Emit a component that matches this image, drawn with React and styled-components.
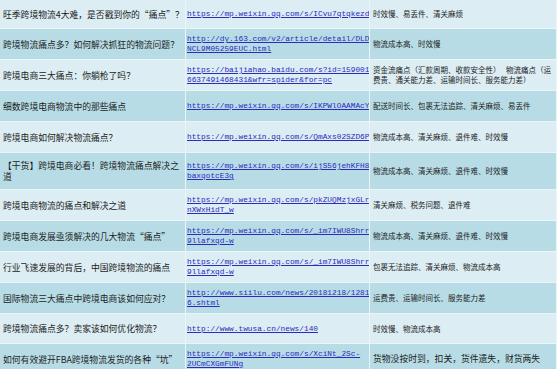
import React from "react";
import styled, { createGlobalStyle } from "styled-components";

const GlobalStyle = createGlobalStyle`
  html, body { margin: 0; padding: 0; background: #ffffff; }
  body { font-family: "Noto Sans CJK SC", "Noto Sans", sans-serif; overflow: hidden; }
`;

const Sheet = styled.div`
  display: flex;
  flex-direction: column;
  gap: 1px;
  width: 556px;
  padding-right: 1px;
  background: #eaf5f9;
`;

const Row = styled.div`
  --shade: ${(p) => (p.$dark ? "#b8dce6" : "#dcedf3")};
  display: grid;
  grid-template-columns: 185px 183px 186px;
  column-gap: 1px;
  height: ${(p) => p.$h}px;
  background: #eaf5f9;
`;

const TitleCell = styled.div`
  display: flex;
  align-items: center;
  padding-left: 3px;
  background: var(--shade);
  color: #1c1c1c;
  font-size: 8.8px;
  line-height: 11px;
  overflow: hidden;
`;

const LinkCell = styled.div`
  display: flex;
  flex-direction: column;
  justify-content: center;
  padding-left: 1px;
  background: var(--shade);
  overflow: hidden;
`;

const LinkLine = styled.a`
  display: block;
  white-space: nowrap;
  font-family: "Liberation Mono", "DejaVu Sans Mono", monospace;
  font-size: 7.8px;
  line-height: 10px;
  color: #2b2bbd;
  text-decoration: underline;
`;

const NoteCell = styled.div`
  display: flex;
  flex-direction: column;
  justify-content: center;
  padding-left: 3px;
  background: var(--shade);
  color: #1c1c1c;
  font-size: ${(p) => (p.$big ? "8.8px" : "7.5px")};
  line-height: 10px;
  overflow: hidden;
`;

const NoteLine = styled.span`
  display: block;
  white-space: nowrap;
`;

const rows = [
  {
    h: 28,
    title: "旺季跨境物流4大难，是否戳到你的“痛点”？",
    link: ["https://mp.weixin.qq.com/s/ICvu7qtqkezdXw"],
    note: ["时效慢、易丢件、清关麻烦"],
  },
  {
    h: 30,
    dark: true,
    title: "跨境物流痛点多？如何解决抓狂的物流问题？",
    link: ["http://dy.163.com/v2/article/detail/DLD", "NCL9M05259EUC.html"],
    note: ["物流成本高、时效慢"],
  },
  {
    h: 30,
    title: "跨境电商三大痛点：你躺枪了吗？",
    link: ["https://baijiahao.baidu.com/s?id=159001", "6637491468431&wfr=spider&for=pc"],
    note: ["资金流痛点（汇款周期、收款安全性）　 物流痛点（运", "费贵、通关能力差、运输时间长、服务能力差）"],
  },
  {
    h: 30,
    dark: true,
    title: "细数跨境电商物流中的那些痛点",
    link: ["https://mp.weixin.qq.com/s/IKPWlOAAMAcYtE"],
    note: ["配送时间长、包裹无法追踪、清关麻烦、易丢件"],
  },
  {
    h: 30,
    title: "跨境电商如何解决物流痛点？",
    link: ["https://mp.weixin.qq.com/s/QmAxs02SZD6PiQ"],
    note: ["物流成本高、清关麻烦、退件难、时效慢"],
  },
  {
    h: 36,
    dark: true,
    title: "【干货】跨境电商必看！跨境物流痛点解决之道",
    link: ["https://mp.weixin.qq.com/s/ijS56jehKFH8", "baxqotcE3g"],
    note: ["物流成本高、清关麻烦、退件难、时效慢"],
  },
  {
    h: 30,
    title: "跨境电商物流的痛点和解决之道",
    link: ["https://mp.weixin.qq.com/s/pkZUQMzjxGLr", "nXWxHidT_w"],
    note: ["清关麻烦、税务问题、退件难"],
  },
  {
    h: 30,
    dark: true,
    title: "跨境电商发展亟须解决的几大物流“痛点”",
    link: ["https://mp.weixin.qq.com/s/_im7IWU8Shrr", "9llafxqd-w"],
    note: ["物流成本高、清关麻烦、退件难、时效慢"],
  },
  {
    h: 30,
    title: "行业飞速发展的背后，中国跨境物流的痛点",
    link: ["https://mp.weixin.qq.com/s/_im7IWU8Shrr", "9llafxqd-w"],
    note: ["包裹无法追踪、清关麻烦、物流成本高"],
  },
  {
    h: 30,
    dark: true,
    title: "国际物流三大痛点中跨境电商该如何应对？",
    link: ["http://www.siilu.com/news/20181218/1281", "6.shtml"],
    note: ["运费贵、运输时间长、服务能力差"],
  },
  {
    h: 29,
    title: "跨境物流痛点多？卖家该如何优化物流？",
    link: ["http://www.twusa.cn/news/140"],
    note: ["时效慢、物流成本高"],
  },
  {
    h: 30,
    dark: true,
    title: "如何有效避开FBA跨境物流发货的各种“坑”",
    link: ["https://mp.weixin.qq.com/s/XciNt_2Sc-", "2UCmCXGmFUNg"],
    note: ["货物没按时到，扣关，货件遗失，财货两失"],
    big: true,
  },
];

export default function App() {
  return (
    <>
      <GlobalStyle />
      <Sheet>
        {rows.map((r, i) => (
          <Row key={i} $h={r.h} $dark={r.dark}>
            <TitleCell>{r.title}</TitleCell>
            <LinkCell>
              {r.link.map((l, j) => (
                <LinkLine key={j} href="#">
                  {l}
                </LinkLine>
              ))}
            </LinkCell>
            <NoteCell $big={r.big}>
              {r.note.map((n, j) => (
                <NoteLine key={j}>{n}</NoteLine>
              ))}
            </NoteCell>
          </Row>
        ))}
      </Sheet>
    </>
  );
}
